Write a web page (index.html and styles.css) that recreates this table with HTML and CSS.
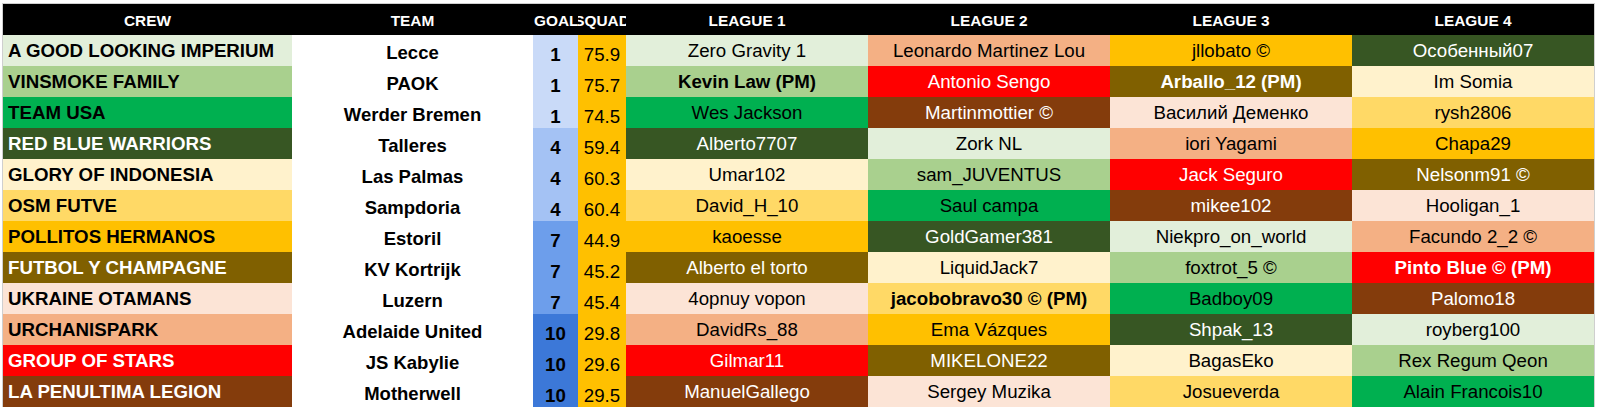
FILE: index.html
```html
<!DOCTYPE html>
<html>
<head>
<meta charset="utf-8">
<link rel="stylesheet" href="styles.css">
</head>
<body>
<div class="sheet">
  <div class="hd">CREW</div>
  <div class="hd">TEAM</div>
  <div class="hd hd-left">GOALS</div>
  <div class="hd">SQUAD</div>
  <div class="hd">LEAGUE 1</div>
  <div class="hd">LEAGUE 2</div>
  <div class="hd">LEAGUE 3</div>
  <div class="hd">LEAGUE 4</div>

  <div class="crew lg">A GOOD LOOKING IMPERIUM</div>
  <div class="team">Lecce</div>
  <div class="goals b1">1</div>
  <div class="squad">75.9</div>
  <div class="lg cell">Zero Gravity 1</div>
  <div class="o2 cell">Leonardo Martinez Lou</div>
  <div class="y cell">jllobato ©</div>
  <div class="dg cell">Особенный07</div>

  <div class="crew g2">VINSMOKE FAMILY</div>
  <div class="team">PAOK</div>
  <div class="goals b1">1</div>
  <div class="squad">75.7</div>
  <div class="g2 cell bold">Kevin Law (PM)</div>
  <div class="r cell">Antonio Sengo</div>
  <div class="dy cell bold">Arballo_12 (PM)</div>
  <div class="y1 cell">Im Somia</div>

  <div class="crew g">TEAM USA</div>
  <div class="team">Werder Bremen</div>
  <div class="goals b1">1</div>
  <div class="squad">74.5</div>
  <div class="g cell">Wes Jackson</div>
  <div class="br cell">Martinmottier ©</div>
  <div class="o1 cell">Василий Деменко</div>
  <div class="y2 cell">rysh2806</div>

  <div class="crew dg">RED BLUE WARRIORS</div>
  <div class="team">Talleres</div>
  <div class="goals b2">4</div>
  <div class="squad">59.4</div>
  <div class="dg cell">Alberto7707</div>
  <div class="lg cell">Zork NL</div>
  <div class="o2 cell">iori Yagami</div>
  <div class="y cell">Chapa29</div>

  <div class="crew y1">GLORY OF INDONESIA</div>
  <div class="team">Las Palmas</div>
  <div class="goals b2">4</div>
  <div class="squad">60.3</div>
  <div class="y1 cell">Umar102</div>
  <div class="g2 cell">sam_JUVENTUS</div>
  <div class="r cell">Jack Seguro</div>
  <div class="dy cell">Nelsonm91 ©</div>

  <div class="crew y2">OSM FUTVE</div>
  <div class="team">Sampdoria</div>
  <div class="goals b2">4</div>
  <div class="squad">60.4</div>
  <div class="y2 cell">David_H_10</div>
  <div class="g cell">Saul campa</div>
  <div class="br cell">mikee102</div>
  <div class="o1 cell">Hooligan_1</div>

  <div class="crew y">POLLITOS HERMANOS</div>
  <div class="team">Estoril</div>
  <div class="goals b3">7</div>
  <div class="squad">44.9</div>
  <div class="y cell">kaoesse</div>
  <div class="dg cell">GoldGamer381</div>
  <div class="lg cell">Niekpro_on_world</div>
  <div class="o2 cell">Facundo 2_2 ©</div>

  <div class="crew dy">FUTBOL Y CHAMPAGNE</div>
  <div class="team">KV Kortrijk</div>
  <div class="goals b3">7</div>
  <div class="squad">45.2</div>
  <div class="dy cell">Alberto el torto</div>
  <div class="y1 cell">LiquidJack7</div>
  <div class="g2 cell">foxtrot_5 ©</div>
  <div class="r cell bold">Pinto Blue © (PM)</div>

  <div class="crew o1">UKRAINE OTAMANS</div>
  <div class="team">Luzern</div>
  <div class="goals b3">7</div>
  <div class="squad">45.4</div>
  <div class="o1 cell">4opnuy vopon</div>
  <div class="y2 cell bold">jacobobravo30 © (PM)</div>
  <div class="g cell">Badboy09</div>
  <div class="br cell">Palomo18</div>

  <div class="crew o2">URCHANISPARK</div>
  <div class="team">Adelaide United</div>
  <div class="goals b4">10</div>
  <div class="squad">29.8</div>
  <div class="o2 cell">DavidRs_88</div>
  <div class="y cell">Ema Vázques</div>
  <div class="dg cell">Shpak_13</div>
  <div class="lg cell">royberg100</div>

  <div class="crew r">GROUP OF STARS</div>
  <div class="team">JS Kabylie</div>
  <div class="goals b4">10</div>
  <div class="squad">29.6</div>
  <div class="r cell">Gilmar11</div>
  <div class="dy cell">MIKELONE22</div>
  <div class="y1 cell">BagasEko</div>
  <div class="g2 cell">Rex Regum Qeon</div>

  <div class="crew br">LA PENULTIMA LEGION</div>
  <div class="team">Motherwell</div>
  <div class="goals b4">10</div>
  <div class="squad">29.5</div>
  <div class="br cell">ManuelGallego</div>
  <div class="o1 cell">Sergey Muzika</div>
  <div class="y2 cell">Josueverda</div>
  <div class="g cell">Alain Francois10</div>
</div>
</body>
</html>
```

FILE: styles.css
```css
html, body {
  margin: 0;
  padding: 0;
  background: #ffffff;
}

body {
  font-family: "Liberation Sans", Arial, sans-serif;
  color: #000000;
  padding: 4px 0 0 3px;
}

.sheet {
  display: grid;
  grid-template-columns: 289px 241px 45px 48px 242px 242px 242px 242px;
  grid-auto-rows: 31px;
  width: 1591px;
  outline: 1px solid #cfcfcf;
}

.sheet > div {
  display: flex;
  align-items: center;
  justify-content: center;
  white-space: nowrap;
  overflow: hidden;
  font-size: 18.7px;
  box-sizing: border-box;
}

.sheet > .hd {
  background: #000000;
  color: #ffffff;
  font-weight: bold;
  font-size: 15.4px;
  padding-top: 3px;
}

.sheet > .hd-left {
  justify-content: flex-start;
  padding-left: 1px;
}

.sheet > .crew {
  justify-content: flex-start;
  padding-left: 5px;
  font-weight: bold;
}

.sheet > .team {
  font-weight: bold;
  font-size: 18.5px;
  align-items: flex-end;
  padding-bottom: 2px;
}

.sheet > .goals {
  font-weight: bold;
  align-items: flex-end;
}

.sheet > .squad {
  background: #ffc000;
  align-items: flex-end;
}

.sheet > .bold {
  font-weight: bold;
}

.b1 { background: #c9daf8; }
.b2 { background: #a4c2f4; }
.b3 { background: #6d9eeb; }
.b4 { background: #3c78d8; }

.lg { background: #e2efda; }
.g2 { background: #a9d08e; }
.g  { background: #00b050; }
.dg { background: #375623; color: #ffffff; }
.y1 { background: #fff2cc; }
.y2 { background: #ffd966; }
.y  { background: #ffc000; }
.dy { background: #806000; color: #ffffff; }
.o1 { background: #fce4d6; }
.o2 { background: #f4b084; }
.r  { background: #ff0000; color: #ffffff; }
.br { background: #843c0c; color: #ffffff; }
```
